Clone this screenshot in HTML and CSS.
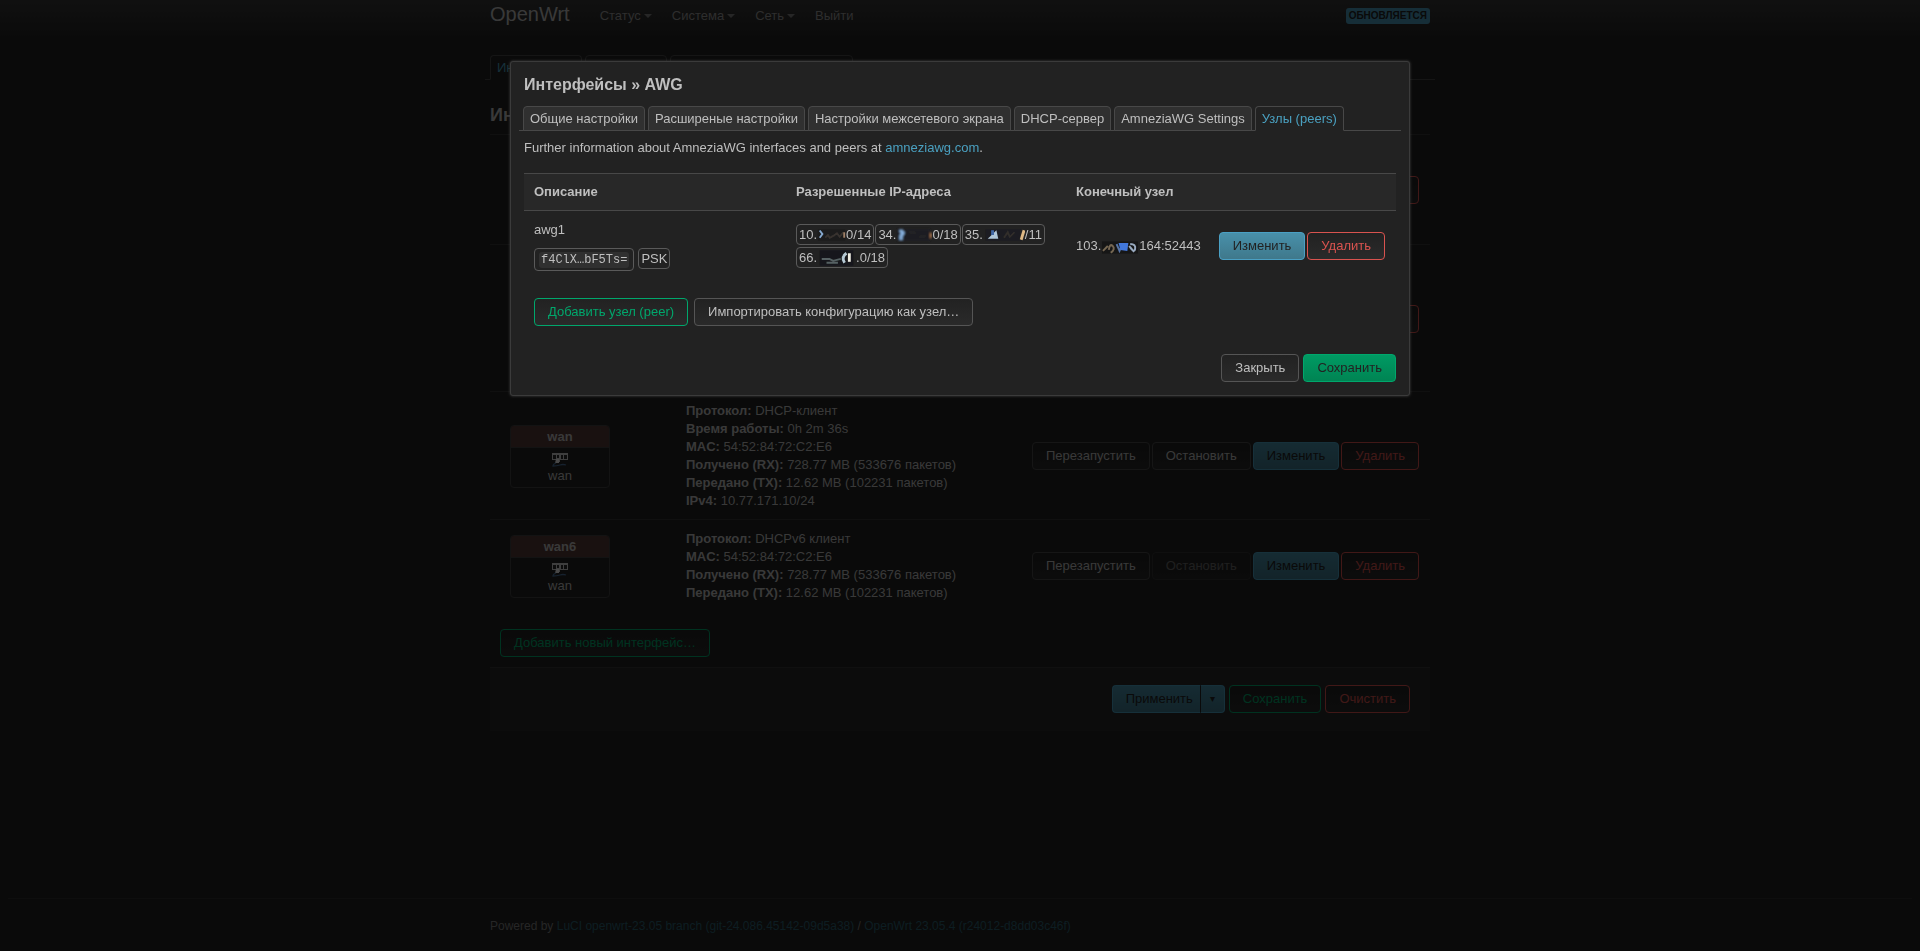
FILE: index.html
```html
<!DOCTYPE html>
<html lang="ru">
<head>
<meta charset="utf-8">
<title>OpenWrt - Интерфейсы - LuCI</title>
<link rel="stylesheet" href="styles.css">
</head>
<body>
<svg width="0" height="0" class="defs" aria-hidden="true">
  <defs>
    <filter id="soft" x="-20%" y="-20%" width="140%" height="140%"><feGaussianBlur stdDeviation="0.8"/></filter>
    <symbol id="port" viewBox="0 0 16 14">
      <path d="M0 0h16v7H8v2H5V7H0z" fill="#d0d0d0"/>
      <path d="M1 2h3v4H1zM5 2h2v3H5zM9 2h2v4H9zM12 2h3v4h-3z" fill="#2a2a2a"/>
      <path d="M4 6h3v4H3z" fill="#f4f4f4"/>
      <path d="M4 10q-3 1-3 3q4 0 7-1t6 0" fill="none" stroke="#4a7099" stroke-width="1.300"/>
    </symbol>
  </defs>
</svg>

<header class="topbar">
  <div class="container topbar-inner">
    <a class="brand" href="#">OpenWrt</a>
    <nav class="menu">
      <a class="drop" href="#">Статус</a>
      <a class="drop" href="#">Система</a>
      <a class="drop" href="#">Сеть</a>
      <a href="#">Выйти</a>
    </nav>
    <span class="indicator">Обновляется</span>
  </div>
</header>

<main class="container main">
  <nav class="tabs page-tabs">
    <a class="tab active" href="#">Интерфейсы</a>
    <a class="tab" href="#">Устройства</a>
    <a class="tab" href="#">Глобальные настройки сети</a>
  </nav>
  <h2 class="title">Интерфейсы</h2>
  <table class="ifaces">
    <colgroup><col class="c-box"><col class="c-info"><col></colgroup>
    <tbody>
    <tr class="five-lines">
      <td></td><td></td>
      <td><div class="actions"><button class="btn danger">Удалить</button></div></td>
    </tr>
    <tr class="seven-lines">
      <td></td><td></td>
      <td><div class="actions"><button class="btn danger">Удалить</button></div></td>
    </tr>
    <tr>
      <td><div class="ifacebox"><div class="iface-head">wan</div><div class="iface-body"><svg class="port"><use href="#port"/></svg><span>wan</span></div></div></td>
      <td><b>Протокол:</b> DHCP-клиент<br><b>Время работы:</b> 0h 2m 36s<br><b>MAC:</b> 54:52:84:72:C2:E6<br><b>Получено (RX):</b> 728.77 MB (533676 пакетов)<br><b>Передано (TX):</b> 12.62 MB (102231 пакетов)<br><b>IPv4:</b> 10.77.171.10/24</td>
      <td><div class="actions"><button class="btn">Перезапустить</button><button class="btn">Остановить</button><button class="btn primary">Изменить</button><button class="btn danger">Удалить</button></div></td>
    </tr>
    <tr>
      <td><div class="ifacebox"><div class="iface-head">wan6</div><div class="iface-body"><svg class="port"><use href="#port"/></svg><span>wan</span></div></div></td>
      <td><b>Протокол:</b> DHCPv6 клиент<br><b>MAC:</b> 54:52:84:72:C2:E6<br><b>Получено (RX):</b> 728.77 MB (533676 пакетов)<br><b>Передано (TX):</b> 12.62 MB (102231 пакетов)</td>
      <td><div class="actions"><button class="btn">Перезапустить</button><button class="btn" disabled>Остановить</button><button class="btn primary">Изменить</button><button class="btn danger">Удалить</button></div></td>
    </tr>
    </tbody>
  </table>
  <div class="create"><button class="btn positive">Добавить новый интерфейс…</button></div>
  <div class="page-actions">
    <div class="split"><button class="btn primary">Применить</button><button class="btn primary arrow" aria-label="Ещё">▾</button></div>
    <button class="btn positive">Сохранить</button>
    <button class="btn danger">Очистить</button>
  </div>
</main>

<footer class="footer">
  <div class="container">Powered by <a href="#">LuCI openwrt-23.05 branch (git-24.086.45142-09d5a38)</a> / <a href="#">OpenWrt 23.05.4 (r24012-d8dd03c46f)</a></div>
</footer>

<div class="overlay">
  <section class="modal" role="dialog" aria-labelledby="modal-title">
    <h4 id="modal-title" class="modal-title">Интерфейсы » AWG</h4>
    <nav class="tabs">
      <a class="tab" href="#">Общие настройки</a>
      <a class="tab" href="#">Расширеные настройки</a>
      <a class="tab" href="#">Настройки межсетевого экрана</a>
      <a class="tab" href="#">DHCP-сервер</a>
      <a class="tab" href="#">AmneziaWG Settings</a>
      <a class="tab active" href="#">Узлы (peers)</a>
    </nav>
    <p class="descr">Further information about AmneziaWG interfaces and peers at <a href="#">amneziawg.com</a>.</p>
    <table class="peers">
      <colgroup><col class="p-name"><col class="p-ips"><col class="p-end"><col></colgroup>
      <thead><tr><th>Описание</th><th>Разрешенные IP-адреса</th><th>Конечный узел</th><th></th></tr></thead>
      <tbody><tr>
        <td>
          <div class="peer-name">awg1</div>
          <div class="keys"><span class="badge key"><code>f4ClX…bF5Ts=</code></span><span class="badge">PSK</span></div>
        </td>
        <td>
          <div class="ips">
            <span class="badge">10.<svg class="smudge" width="29" height="16" viewBox="0 0 32 16"><g filter="url(#soft)"><rect x="1" y="2" width="30" height="12" fill="#1c1c1e"/><path d="M3 3l3 4-3 4" stroke="#86a9cf" stroke-width="2" fill="none"/><path d="M9 11l3-3 2 3 4-2 4-3 3 4 4-5" stroke="#38332f" stroke-width="2" fill="none"/><path d="M30 5v6" stroke="#a08066" stroke-width="2"/></g></svg>0/14</span>
            <span class="badge">34.<svg class="smudge" width="36" height="16" viewBox="0 0 36 16"><g filter="url(#soft)"><rect x="1" y="2" width="33" height="12" fill="#1d1e20"/><path d="M4 3l3 3-2 3v4" stroke="#8db9ea" stroke-width="3" fill="none"/><path d="M14 5l5 1M24 10l5-1" stroke="#292929" stroke-width="2"/><path d="M35 6v5" stroke="#a9744c" stroke-width="2"/></g></svg>0/18</span>
            <span class="badge">35.<svg class="smudge" width="42" height="16" viewBox="0 0 44 16"><g filter="url(#soft)"><rect x="3" y="2" width="36" height="12" fill="#1b1c20"/><path d="M5 12l9-9 2 9z" fill="#b0c6d9"/><path d="M10 3v5" stroke="#4268a6" stroke-width="3"/><path d="M22 11l4-6 2 5 5-5" stroke="#302d2c" stroke-width="2" fill="none"/><path d="M43 3l-3 10" stroke="#dfb985" stroke-width="3"/></g></svg>/11</span>
            <span class="badge">66.<svg class="smudge" width="39" height="16" viewBox="0 0 41 16"><g filter="url(#soft)"><rect x="3" y="0" width="35" height="16" fill="#17191b"/><path d="M5 9h8l4 2 8-2M10 13h12" stroke="#566164" stroke-width="2" fill="none"/><path d="M31 3q-6 4-2 10" stroke="#b5c8d4" stroke-width="3" fill="none"/><path d="M34 3v9" stroke="#f0eee4" stroke-width="3"/></g></svg>.0/18</span>
          </div>
        </td>
        <td class="endpoint">103.<svg class="smudge" width="38" height="16" viewBox="0 0 39 16"><g filter="url(#soft)"><rect x="1" y="2" width="37" height="13" fill="#171819"/><path d="M2 12l5-5M8 11q1-7 4-4t-2 7" stroke="#766752" stroke-width="2" fill="none"/><path d="M16 5l3 7 3-7" stroke="#5874a6" stroke-width="2" fill="none"/><path d="M18 4h10l-1 8-7-1z" fill="#4378dc"/><path d="M30 5q6 0 5 5t-6-3l5 6" stroke="#9aabc0" stroke-width="2" fill="none"/></g></svg>164:52443</td>
        <td><div class="actions"><button class="btn primary">Изменить</button><button class="btn danger">Удалить</button></div></td>
      </tr></tbody>
    </table>
    <div class="peer-create">
      <button class="btn positive">Добавить узел (peer)</button>
      <button class="btn">Импортировать конфигурацию как узел…</button>
    </div>
    <div class="modal-actions">
      <button class="btn">Закрыть</button>
      <button class="btn save">Сохранить</button>
    </div>
  </section>
</div>
</body>
</html>
```
FILE: styles.css
```css
* { box-sizing: border-box; }
body {
  margin: 0;
  min-height: 100vh;
  display: flex;
  flex-direction: column;
  background: #222;
  color: #bfbfbf;
  font: 13px/18px "Liberation Sans", Arial, sans-serif;
}
.defs { position: absolute; }
a { color: #4aa0c0; text-decoration: none; }
.container { width: 100%; max-width: 940px; margin: 0 auto; }

.topbar { background: linear-gradient(#383838, #222); height: 40px; }
.topbar-inner { display: flex; align-items: flex-start; }
.brand { font-size: 20px; line-height: 28px; color: #bfbfbf; margin-right: 20px; }
.menu { display: flex; }
.menu a { color: #999; padding: 7px 10px; display: flex; align-items: center; }
.menu .drop::after {
  content: "";
  margin-left: 3px;
  border: 4px solid transparent;
  border-top-color: #808080;
  border-bottom: 0;
}
.indicator {
  margin: 8px 0 0 auto;
  padding: 0 3px;
  border-radius: 3px;
  background: #4b9bbd;
  color: #222;
  font-size: 10px;
  font-weight: bold;
  line-height: 16px;
  text-transform: uppercase;
}

.main { flex: 1; padding-top: 15px; }
.tabs {
  display: flex;
  gap: 3px;
  margin: 0 -5px;
  padding: 0 4px;
  border-bottom: 1px solid #484848;
}
.page-tabs { padding: 0 5px; }
.tab {
  padding: 3px 6px;
  margin-bottom: -1px;
  border: 1px solid #484848;
  border-radius: 4px 4px 0 0;
  background: #303030;
  color: #bfbfbf;
  line-height: 17px;
}
.page-tabs .tab { background: #222; }
.tab.active { background: #222; border-bottom-color: #222; color: #4aa0c0; }
.title { margin: 17px 0 0; font-size: 18px; line-height: 37px; }

.ifaces, .peers { width: 100%; border-collapse: collapse; table-layout: fixed; }
.ifaces td { border-top: 1px solid #363636; padding: 10px 10px 9px; }
.c-box { width: 186px; }
.c-info { width: 330px; }
.five-lines { height: 110px; }
.seven-lines { height: 147px; }
.actions { display: flex; justify-content: flex-end; gap: 2px; padding-right: 1px; }

.btn {
  height: 28px;
  padding: 0 13px;
  border: 1px solid #555;
  border-radius: 4px;
  background: linear-gradient(#222, #2a2a2a);
  color: #bfbfbf;
  font: inherit;
  white-space: nowrap;
}
.btn:disabled { opacity: .45; }
.btn.primary { background: linear-gradient(#4890aa, #3f788b); border-color: #4aa0c4; color: #222; }
.btn.danger { border-color: #d9534f; color: #d9534f; }
.btn.positive { border-color: #00a76c; color: #00a76c; }
.btn.save { background: linear-gradient(#009a63, #008453); border-color: #00a76c; color: #222; }
.ifaces .btn:not(.primary):not(.danger) { border-color: #4c4c4c; }

.ifacebox {
  width: 100px;
  margin-left: 10px;
  border: 1px solid #404040;
  border-radius: 4px;
  overflow: hidden;
  text-align: center;
}
.iface-head { background: #553a38; border-bottom: 1px solid #404040; line-height: 21px; font-weight: bold; }
.iface-body { display: flex; flex-direction: column; align-items: center; padding: 5px 0 3px; line-height: 17px; }
.port { width: 16px; height: 14px; }

.create { padding: 18px 10px 10px; }
.page-actions {
  display: flex;
  justify-content: flex-end;
  gap: 4px;
  padding: 17px 20px 18px;
  border-top: 1px solid #363636;
  background: #2b2b2b;
}
.split { display: flex; }
.split .btn { padding: 0 7px 0 13px; border-right-color: #222; border-radius: 4px 0 0 4px; }
.split .btn.arrow { padding: 0 9px; border-color: #4aa0c4; border-left: 0; border-radius: 0 4px 4px 0; font-size: 10px; }
.footer { margin: 0 8px; padding: 18px 0 16px; border-top: 1px solid #303030; color: #808080; font-size: 12px; }
.footer a { color: #2d6274; }

.overlay {
  position: fixed;
  inset: 0;
  padding-top: 61px;
  background: rgba(0, 0, 0, .7);
}
.modal {
  width: 90%;
  max-width: 900px;
  margin: 0 auto;
  padding: 13px;
  border: 1px solid #3b3b3b;
  border-radius: 3px;
  background: #222;
  box-shadow: 0 0 3px #444;
}
.modal-title { margin: 0 0 12px; font-size: 16px; line-height: 19px; }
.descr { margin: 8px 0 16px; }
.peers { border-top: 1px solid #484848; }
.peers th { padding: 9px 10px; text-align: left; background: #282828; border-bottom: 1px solid #484848; line-height: 18px; }
.peers td { padding: 10px 10px 9px; }
.p-name { width: 262px; }
.p-ips { width: 280px; }
.p-end { width: 142px; }
.peers td:nth-child(4) { padding-left: 0; }
.badge {
  display: inline-flex;
  align-items: center;
  height: 21px;
  padding: 0 2px;
  border: 1px solid #5a5a5a;
  border-radius: 4px;
}
.keys { display: flex; align-items: flex-start; gap: 4px; margin-top: 9px; }
.key { height: 23px; padding: 0 4px; }
.key code { padding: 0 2px; border-radius: 3px; background: #303030; font: 12px/16px "Liberation Mono", monospace; }
.ips { display: flex; flex-wrap: wrap; gap: 2px 1px; }
.endpoint { white-space: nowrap; }
.smudge { vertical-align: middle; }
.peer-create { display: flex; gap: 6px; padding: 18px 10px 0; }
.modal-actions { display: flex; justify-content: flex-end; gap: 4px; padding-top: 28px; }
```
